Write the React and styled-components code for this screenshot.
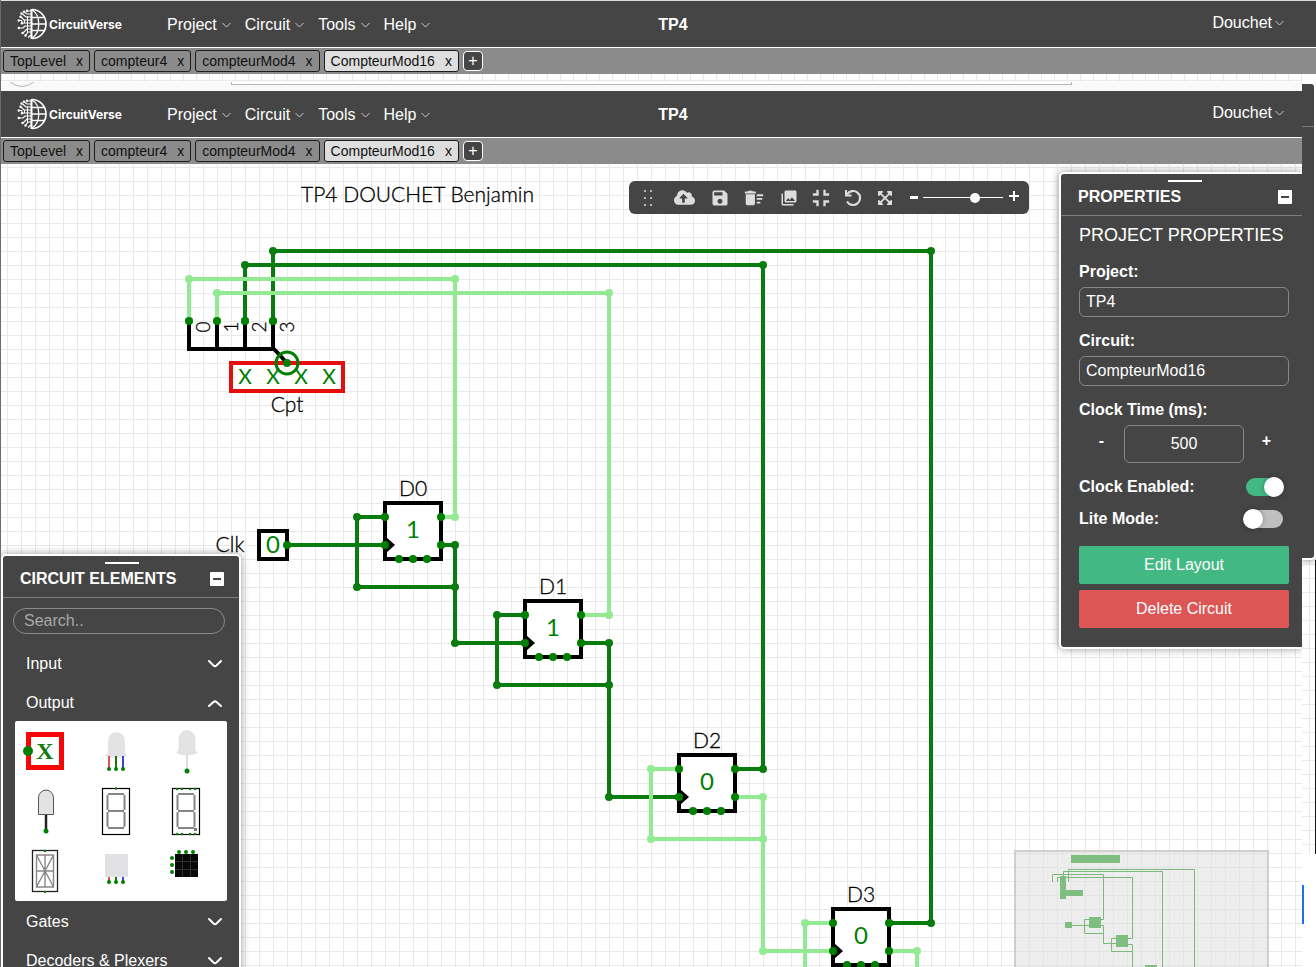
import React from 'react';
import styled, { createGlobalStyle, css } from 'styled-components';
import {
  MdSave,
  MdDeleteSweep,
  MdPhotoLibrary,
  MdFullscreenExit,
} from 'react-icons/md';
import { FaCloudUploadAlt, FaExpandArrowsAlt } from 'react-icons/fa';

const DARK = '#454545';
const GREEN = '#008000';
const WIRE = '#087c0e';
const LIGHT = '#93ea93';

const GlobalStyle = createGlobalStyle`
  * { box-sizing: border-box; }
  body {
    margin: 0;
    background: #fff;
    font-family: "Liberation Sans", Arial, sans-serif;
    font-size: 16px;
  }
  button, input { font: inherit; color: inherit; }
  button { background: none; border: 0; padding: 0; cursor: pointer; }
  svg { flex: none; }
`;

const Page = styled.div`
  display: grid;
  grid-template-columns: minmax(0, 1fr) 14px;
  height: 100vh;
  overflow: hidden;
  border-left: 1px solid #6a6a6a;
`;

const Main = styled.main`
  display: flex;
  flex-direction: column;
  min-height: 0;
  border-top: 1px solid #ddd;
`;

/* ---------- header ---------- */

const Header = styled.header`
  display: flex;
  align-items: center;
  flex: none;
  height: 47px;
  padding: 0 18px 0 16px;
  background: ${DARK};
  border-bottom: 1px solid #fff;
  color: #fff;
`;

const HeaderLeft = styled.div`
  display: flex;
  align-items: center;
  flex: 1 1 45px;
`;

const Brand = styled.a`
  display: flex;
  align-items: center;
  gap: 2px;
  width: 150px;
  color: #fff;
  text-decoration: none;
  font: 700 12px Inter, "Open Sans", sans-serif;
`;

const Menu = styled.nav`
  display: flex;
  gap: 14px;
  padding-top: 2px;
`;

const MenuButton = styled.button`
  display: flex;
  align-items: center;
  gap: ${(p) => (p.$tight ? 3 : 5)}px;
  line-height: 18px;
`;

const ProjectName = styled.h1`
  margin: 0;
  padding-top: 2px;
  font-size: 16px;
  line-height: 18px;
`;

const HeaderRight = styled.div`
  display: flex;
  justify-content: flex-end;
  flex: 1 1 0;
  padding-bottom: 2px;
`;

const Tabs = styled.div`
  display: flex;
  align-items: center;
  flex: none;
  gap: 4px;
  height: 26px;
  padding: 0 2px;
  background: #8b8b8b;
`;

const Tab = styled.div`
  display: flex;
  align-items: center;
  gap: 10px;
  height: 22px;
  padding: 0 6px;
  border: 1px solid #1c1c1c;
  border-radius: 3px;
  background: ${(p) => (p.$active ? '#dedede' : 'transparent')};
  color: #111;
  font-size: 14px;
  line-height: 16px;
`;

const AddTab = styled.button`
  width: 20px;
  height: 20px;
  border: 1px solid #fff;
  border-radius: 4px;
  background: ${DARK};
  color: #fff;
  font-size: 16px;
  line-height: 16px;
`;

const Chevron = () => (
  <svg width="9" height="6" viewBox="0 0 9 6" fill="none" stroke="#ccc" aria-hidden="true">
    <path d="M0.5 1 L4.5 5 L8.5 1" />
  </svg>
);

const Logo = () => (
  <svg width="30" height="32" viewBox="0 0 30 32" fill="none" stroke="#fff" strokeWidth="1.3" aria-hidden="true">
    <path d="M15 1.500 A14 14.500 0 0 1 15 30.500" strokeWidth="1.700" />
    <path d="M14.500 1 V31" strokeWidth="2" />
    <path d="M15 2 C24 7 24 25 15 30" />
    <path d="M15 9.500 H27 M15 16 H29 M15 22.500 H27" />
    <path d="M14 3 H10 M14 6 H10 L7.500 4 M14 9 H9 L5 5.500 M14 12 H7 L4 9 M14 15 H5.500 M14 18 H8 L6 20 H2 M14 21 H10 L6 25 M14 24 H11 L8.500 27.500 M14 27 L11 29.500" strokeWidth="1.200" />
    <path d="M10.500 8 V25 M7.500 12 V15 M2 12.500 H5 V15" strokeWidth="1" />
    <g fill="#fff" stroke="none">
      <circle cx="10" cy="2.800" r="1.200" />
      <circle cx="7" cy="3.800" r="1.200" />
      <circle cx="4.500" cy="5.500" r="1.200" />
      <circle cx="3.500" cy="8.800" r="1.200" />
      <circle cx="1.800" cy="12.500" r="1.200" />
      <circle cx="5" cy="15.300" r="1.200" />
      <circle cx="1.800" cy="20" r="1.200" />
      <circle cx="5.500" cy="25" r="1.200" />
      <circle cx="8.500" cy="27.500" r="1.200" />
    </g>
  </svg>
);

const TAB_NAMES = ['TopLevel', 'compteur4', 'compteurMod4', 'CompteurMod16'];

const TopBar = () => (
  <>
    <Header>
      <HeaderLeft>
        <Brand href="#"><Logo />CircuitVerse</Brand>
        <Menu>
          {['Project', 'Circuit', 'Tools', 'Help'].map((m) => (
            <MenuButton key={m}>{m}<Chevron /></MenuButton>
          ))}
        </Menu>
      </HeaderLeft>
      <ProjectName>TP4</ProjectName>
      <HeaderRight>
        <MenuButton $tight>Douchet<Chevron /></MenuButton>
      </HeaderRight>
    </Header>
    <Tabs>
      {TAB_NAMES.map((t) => (
        <Tab key={t} $active={t === 'CompteurMod16'}>
          <span>{t}</span>
          <button aria-label={'Close ' + t}>x</button>
        </Tab>
      ))}
      <AddTab aria-label="New circuit">+</AddTab>
    </Tabs>
  </>
);

/* ---------- strip between the two windows ---------- */

const gridLines = css`
  background-color: #fff;
  background-image:
    linear-gradient(to right, #e9e9e9 1px, transparent 1px),
    linear-gradient(to bottom, #e9e9e9 1px, transparent 1px);
`;

const GridStrip = styled.div`
  ${gridLines}
  flex: none;
  height: 8px;
  background-size: 13px 13px;
  background-position: 0 6px;
`;

const BrowserStrip = styled.div`
  display: grid;
  grid-template-columns: 222px minmax(0, 1fr);
  flex: none;
  height: 9px;
  padding: 0 230px 0 8px;
  background: #f9f9fa;
`;

const AddressBar = styled.div`
  height: 3px;
  border: 1px solid #b5b5b5;
  border-top: 0;
  background: #fff;
`;

/* ---------- canvas ---------- */

const Canvas = styled.section`
  ${gridLines}
  position: relative;
  flex: 1;
  min-height: 0;
  overflow: hidden;
  background-size: 14px 14px;
  background-position: 6px 3px;
`;

const Drawing = styled.svg`
  display: block;
  width: 100%;
  height: 100%;
  font-family: Lato, "Open Sans", sans-serif;
  font-weight: 300;
  font-size: 21px;
`;

const Label21 = styled.text`
  fill: #000;
  stroke: #000;
  stroke-width: 0.3px;
  text-anchor: ${(p) => p.$anchor || 'middle'};
`;

const Value = styled.text`
  fill: ${GREEN};
  font-size: ${(p) => p.$size || 24}px;
  font-weight: 400;
  text-anchor: middle;
`;

const WIRES = [
  [WIRE, '273,321 273,251 931,251 931,923 889,923'],
  [WIRE, '245,321 245,265 763,265 763,769 735,769'],
  [WIRE, '287,545 385,545'],
  [WIRE, '385,517 357,517 357,587 455,587'],
  [WIRE, '441,545 455,545 455,643 525,643'],
  [WIRE, '525,615 497,615 497,685 609,685'],
  [WIRE, '581,643 609,643 609,797 679,797'],
  [LIGHT, '189,321 189,279 455,279 455,517 441,517'],
  [LIGHT, '217,321 217,293 609,293 609,615 581,615'],
  [LIGHT, '679,769 651,769 651,839 763,839'],
  [LIGHT, '735,797 763,797 763,951 833,951'],
  [LIGHT, '833,923 805,923 805,993'],
  [LIGHT, '889,951 917,951 917,993'],
];

const FLIP_FLOPS = [
  ['D0', '1', 385, 503],
  ['D1', '1', 525, 601],
  ['D2', '0', 679, 755],
  ['D3', '0', 833, 909],
];

const Wire = ({ color, points }) => (
  <g>
    <polyline points={points} fill="none" stroke={color} strokeWidth="4" />
    {points.split(' ').map((p) => {
      const [x, y] = p.split(',');
      return <circle key={p} cx={x} cy={y} r="4" fill={color} />;
    })}
  </g>
);

const PORTS = [[0, 14], [0, 42], [56, 14], [56, 42], [14, 56], [28, 56], [42, 56]];

const FlipFlop = ({ name, value, x, y }) => (
  <g transform={`translate(${x} ${y})`}>
    <rect width="56" height="56" fill="#fff" stroke="#000" strokeWidth="4" />
    <path d="M1 34 L10 42 L1 50 Z" />
    {PORTS.map(([px, py]) => (
      <circle key={px + '-' + py} cx={px} cy={py} r="4" fill={GREEN} />
    ))}
    <Value x="28" y="35">{value}</Value>
    <Label21 x="28" y="-7">{name}</Label21>
  </g>
);

const Circuit = () => (
  <Drawing role="img" aria-label="Circuit">
    <g transform="translate(-1 -164)">
      <Label21 $anchor="start" x="301" y="202">TP4 DOUCHET Benjamin</Label21>
      {WIRES.map(([c, p]) => <Wire key={p} color={c} points={p} />)}
      <path d="M189 321 V349 H273 M217 321 V349 M245 321 V349 M273 321 V349" fill="none" stroke="#000" strokeWidth="4" strokeLinecap="square" />
      <rect x="231" y="363" width="112" height="28" fill="#fff" stroke="#e60d0d" strokeWidth="4" />
      <path d="M274 349 L287 363" stroke="#000" strokeWidth="4" />
      {[245, 273, 301, 329].map((x) => (
        <Value $size={21} key={x} x={x} y="384">X</Value>
      ))}
      <circle cx="287" cy="363" r="11" fill="none" stroke={GREEN} strokeWidth="3" />
      <circle cx="287" cy="363" r="4" fill={GREEN} />
      {[189, 217, 245, 273].map((x, i) => (
        <g key={x}>
          <circle cx={x} cy="321" r="4" fill={GREEN} />
          <Label21 transform={`translate(${x + 21} 327) rotate(-90)`} fontSize="19">{i}</Label21>
        </g>
      ))}
      <Label21 x="287" y="412">Cpt</Label21>
      <Label21 x="230" y="552">Clk</Label21>
      <rect x="259" y="531" width="28" height="28" fill="#fff" stroke="#000" strokeWidth="4" />
      <Value x="273" y="553">0</Value>
      <circle cx="287" cy="545" r="4" fill={GREEN} />
      {FLIP_FLOPS.map(([n, v, x, y]) => <FlipFlop key={n} name={n} value={v} x={x} y={y} />)}
    </g>
  </Drawing>
);

/* ---------- toolbar ---------- */

const Toolbar = styled.div`
  position: absolute;
  top: 17px;
  left: 628px;
  display: flex;
  align-items: center;
  width: 400px;
  height: 33px;
  padding: 0 8px 0 10px;
  border-radius: 6px;
  background: ${DARK};
  color: #ddd;
`;

const ToolButton = styled.button`
  display: flex;
  align-items: center;
  justify-content: center;
  flex: none;
  width: ${(p) => p.$w}px;
  height: 24px;
`;

const ZoomSlider = styled.input`
  appearance: none;
  width: 80px;
  height: 10px;
  margin: 0 4px 0 1px;
  background: linear-gradient(#fff, #fff) center / 100% 1px no-repeat;
  &::-webkit-slider-thumb {
    appearance: none;
    width: 10px;
    height: 10px;
    border-radius: 50%;
    background: #fff;
  }
`;

const Grip = () => (
  <svg width="12" height="18" viewBox="0 0 12 18" fill="#bbb" aria-hidden="true">
    {[1, 8, 15].map((y) => (
      <g key={y}>
        <rect x="2" y={y} width="2" height="2" />
        <rect x="8" y={y} width="2" height="2" />
      </g>
    ))}
  </svg>
);

const Undo = () => (
  <svg width="18" height="18" viewBox="0 0 18 18" fill="none" stroke="currentColor" aria-hidden="true">
    <path d="M3 5.500 A7 7 0 1 1 3 12.500" strokeWidth="2.200" />
    <path d="M2 1 V6.500 H7.500" strokeWidth="2" />
  </svg>
);

const ZoomMark = ({ d, weight }) => (
  <svg width="14" height="14" viewBox="0 0 14 14" stroke="#fff" strokeWidth={weight} aria-hidden="true">
    <path d={d} />
  </svg>
);

const Tools = () => (
  <Toolbar>
    <ToolButton $w={17} aria-label="Move toolbar"><Grip /></ToolButton>
    <ToolButton $w={56} aria-label="Save online"><FaCloudUploadAlt size={21} /></ToolButton>
    <ToolButton $w={16} aria-label="Save offline"><MdSave size={20} /></ToolButton>
    <ToolButton $w={52} aria-label="Delete"><MdDeleteSweep size={22} /></ToolButton>
    <ToolButton $w={18} aria-label="Download image"><MdPhotoLibrary size={18} /></ToolButton>
    <ToolButton $w={46} aria-label="Fit to screen"><MdFullscreenExit size={28} /></ToolButton>
    <ToolButton $w={18} aria-label="Undo"><Undo /></ToolButton>
    <ToolButton $w={46} aria-label="View mode"><FaExpandArrowsAlt size={16} /></ToolButton>
    <ToolButton $w={14} aria-label="Zoom out"><ZoomMark d="M2 6.500 H10" weight="3" /></ToolButton>
    <ZoomSlider type="range" aria-label="Zoom" min="0" max="100" defaultValue="67" />
    <ToolButton $w={14} aria-label="Zoom in"><ZoomMark d="M2 5 H12 M7 0 V10" weight="2" /></ToolButton>
  </Toolbar>
);

/* ---------- panels ---------- */

const Panel = styled.aside`
  position: absolute;
  border: 2px solid #fff;
  background: ${DARK};
  color: #fff;
  box-shadow: 0 0 8px rgba(0, 0, 0, 0.4);
`;

const ElementsPanel = styled(Panel)`
  top: 390px;
  left: 0;
  width: 240px;
  min-height: 430px;
  border-radius: 5px;
`;

const PropertiesPanel = styled(Panel)`
  top: 8px;
  right: 0;
  width: 243px;
  height: 477px;
  border-right: 0;
  border-radius: 5px 0 0 5px;
`;

const PanelHead = styled.div`
  display: flex;
  flex-direction: column;
  align-items: center;
  height: 42px;
  padding: 6px ${(p) => p.$right}px 0 17px;
  border-bottom: 1px solid #7d7d7d;
`;

const Handle = styled.div`
  width: 34px;
  height: 2px;
  background: #fff;
`;

const PanelTitleRow = styled.div`
  display: flex;
  align-items: center;
  justify-content: space-between;
  align-self: stretch;
  height: 30px;
`;

const PanelTitle = styled.h2`
  margin: 0;
  font-size: 16px;
  line-height: 18px;
`;

const Minimise = styled.button`
  display: grid;
  place-items: center;
  width: 14px;
  height: 14px;
  border-radius: 1px;
  background: #fff;
  &::before {
    content: "";
    width: 8px;
    height: 2px;
    background: ${DARK};
  }
`;

const PanelHeader = ({ title, right }) => (
  <PanelHead $right={right}>
    <Handle />
    <PanelTitleRow>
      <PanelTitle>{title}</PanelTitle>
      <Minimise aria-label={'Minimise ' + title} />
    </PanelTitleRow>
  </PanelHead>
);

const Search = styled.input`
  display: block;
  width: 212px;
  height: 26px;
  margin: 10px 0 12px 10px;
  padding: 0 10px;
  border: 1px solid #8a8a8a;
  border-radius: 13px;
  background: transparent;
  &::placeholder { color: #a8a8a8; opacity: 1; }
`;

const Categories = styled.div`
  display: flex;
  flex-direction: column;
  gap: 3px;
  padding: 0 12px;
`;

const Category = styled.button`
  display: flex;
  align-items: center;
  justify-content: space-between;
  width: 100%;
  height: 36px;
  padding: 0 5px 0 11px;
`;

const ElementGrid = styled.div`
  display: grid;
  grid-template-columns: repeat(3, 60px);
  grid-auto-rows: 60px;
  column-gap: 11px;
  width: 212px;
  border-radius: 2px;
  background: #fff;
`;

const BigChevron = ({ up }) => (
  <svg width="14" height="10" viewBox="0 0 14 10" fill="none" stroke="#fff" strokeWidth="2" aria-hidden="true">
    <path d={up ? 'M1 8 L5.500 4 Q7 2.800 8.500 4 L13 8' : 'M1 2 L5.500 6.500 Q7 7.800 8.500 6.500 L13 2'} strokeLinecap="round" />
  </svg>
);

const Dots = ({ at, r = 2 }) => at.map(([x, y]) => (
  <circle key={x + '-' + y} cx={x} cy={y} r={r} fill={GREEN} stroke="none" />
));

const DIGIT = 'M22 13 H38 M22 30 H38 M22 47 H38 M21.500 14 V29 M38.500 14 V29 M21.500 31 V46 M38.500 31 V46';

const ELEMENTS = {
  Output: (
    <>
      <rect x="13.500" y="13.500" width="33" height="33" fill="#fff" stroke="#f60606" strokeWidth="5" />
      <Dots at={[[13, 30]]} r={5} />
      <text x="30" y="38" textAnchor="middle" fill="#117a11" fontFamily="Liberation Serif, serif" fontWeight="700" fontSize="24">X</text>
    </>
  ),
  'RGB LED': (
    <>
      <path d="M22 32 V20 A8 8.500 0 0 1 39 20 V32 L41 35 Q30 39 19 35 Z" fill="#e3e3e5" />
      <path d="M23 35 V47" stroke="#e05050" strokeWidth="2" />
      <path d="M30 35 V47" stroke="#117711" strokeWidth="2" />
      <path d="M37 35 V47" stroke="#4040dd" strokeWidth="2" />
      <Dots at={[[23, 48], [30, 48], [37, 48]]} />
    </>
  ),
  'Digital LED': (
    <>
      <path d="M30 32 V49" stroke="#ddd" strokeWidth="2" />
      <path d="M22 29 V18 A8 8.500 0 0 1 38 18 V29 L40 32 Q30 36 20 32 Z" fill="#e3e3e5" stroke="#d4d4d4" strokeWidth="0.500" />
      <Dots at={[[30, 50]]} r={2.5} />
    </>
  ),
  'Variable LED': (
    <>
      <path d="M31 34 V49" stroke="#222" strokeWidth="2.500" />
      <path d="M23.500 33.500 V17 A7.500 8 0 0 1 38.500 17 V33.500 Z" fill="#e3e3e5" stroke="#555" />
      <Dots at={[[31, 50]]} r={2.5} />
    </>
  ),
  'Hex display': (
    <>
      <rect x="16.500" y="7.500" width="27" height="46" fill="#fff" stroke="#000" strokeWidth="1.200" />
      <path d={DIGIT} stroke="#858585" strokeWidth="2" />
      <Dots at={[[30, 7.5]]} r={1.2} />
    </>
  ),
  'Seven segment display': (
    <>
      <rect x="15.500" y="7.500" width="27" height="46" fill="#fff" stroke="#000" strokeWidth="1.200" />
      <path d={DIGIT} transform="translate(-1 0)" stroke="#858585" strokeWidth="2" />
      <rect x="37" y="47" width="3" height="3" fill="#777" />
      <Dots at={[[20, 8], [25, 8], [33, 8], [38, 8], [20, 53], [25, 53], [33, 53], [38, 53]]} r={1.2} />
    </>
  ),
  'Sixteen segment display': (
    <>
      <rect x="17.500" y="9.500" width="25" height="41" fill="#fff" stroke="#222" strokeWidth="1.300" />
      <path d="M21.500 14 H38.500 V46 H21.500 Z M21.500 30 H38.500 M30 14 V46 M22 15 L38 45 M38 15 L22 45" stroke="#888" strokeWidth="1.400" />
      <Dots at={[[30, 10], [30, 51]]} r={1.2} />
    </>
  ),
  'Square RGB LED': (
    <>
      <path d="M23 35 V40" stroke="#e05050" strokeWidth="2" />
      <path d="M30 35 V40" stroke="#117711" strokeWidth="2" />
      <path d="M37 35 V40" stroke="#4040dd" strokeWidth="2" />
      <rect x="19" y="13" width="23" height="23" fill="#e1e1e3" />
      <Dots at={[[23, 41], [30, 41], [37, 41]]} />
    </>
  ),
  'RGB LED matrix': (
    <>
      <rect x="18" y="13" width="23" height="23" fill="#080808" />
      <path d="M25.500 13 V36 M33.500 13 V36 M18 20.500 H41 M18 28.500 H41" stroke="#303030" />
      <Dots at={[[22, 11], [29, 11], [36, 11], [15, 17], [15, 24], [15, 31]]} />
    </>
  ),
};

const Elements = () => (
  <ElementsPanel>
    <PanelHeader title="CIRCUIT ELEMENTS" right={15} />
    <Search type="text" placeholder="Search.." aria-label="Search elements" />
    <Categories>
      <Category>Input<BigChevron /></Category>
      <div>
        <Category aria-expanded="true">Output<BigChevron up /></Category>
        <ElementGrid>
          {Object.entries(ELEMENTS).map(([name, art]) => (
            <button key={name} aria-label={name}>
              <svg width="60" height="60" viewBox="0 0 60 60" fill="none" aria-hidden="true">{art}</svg>
            </button>
          ))}
        </ElementGrid>
      </div>
      <Category>Gates<BigChevron /></Category>
      <Category>Decoders &amp; Plexers<BigChevron /></Category>
    </Categories>
  </ElementsPanel>
);

const Form = styled.form`
  display: flex;
  flex-direction: column;
  padding: 9px 13px 0 18px;
`;

const FormTitle = styled.h3`
  margin: 0 0 18px;
  font-weight: 400;
  font-size: 18px;
  line-height: 20px;
  white-space: nowrap;
`;

const Label = styled.label`
  font-weight: 700;
  line-height: 18px;
`;

const Field = styled.input`
  width: 100%;
  height: 30px;
  margin: 6px 0 15px;
  padding: 0 6px;
  border: 1px solid #868686;
  border-radius: 6px;
  background: transparent;
`;

const Stepper = styled.div`
  display: grid;
  grid-template-columns: 45px 120px 45px;
  margin: 6px 0 14px;
`;

const StepButton = styled.button`
  padding-bottom: 6px;
  font-weight: 700;
`;

const NumberField = styled(Field)`
  height: 38px;
  margin: 0;
  text-align: center;
`;

const SwitchRow = styled.div`
  display: flex;
  align-items: center;
  justify-content: space-between;
  height: 20px;
  margin-bottom: 12px;
  padding-right: 6px;
`;

const Switch = styled.input`
  appearance: none;
  position: relative;
  width: 37px;
  height: 18px;
  margin: 0;
  border-radius: 9px;
  background: #bfbfbf;
  &::before {
    content: "";
    position: absolute;
    top: -1px;
    left: -3px;
    width: 20px;
    height: 20px;
    border-radius: 50%;
    background: #fff;
    box-shadow: 0 0 5px rgba(0, 0, 0, 0.3);
  }
  &:checked { background: #42b983; }
  &:checked::before { left: 18px; }
`;

const Actions = styled.div`
  display: grid;
  gap: 6px;
  padding-top: 5px;
`;

const Action = styled.button`
  height: 38px;
  border-radius: 2px;
  background: ${(p) => (p.$danger ? '#dc5656' : '#42b983')};
`;

const Properties = () => (
  <PropertiesPanel>
    <PanelHeader title="PROPERTIES" right={10} />
    <Form>
      <FormTitle>PROJECT PROPERTIES</FormTitle>
      <Label htmlFor="project">Project:</Label>
      <Field id="project" type="text" defaultValue="TP4" />
      <Label htmlFor="circuit">Circuit:</Label>
      <Field id="circuit" type="text" defaultValue="CompteurMod16" />
      <Label htmlFor="clock">Clock Time (ms):</Label>
      <Stepper>
        <StepButton type="button" aria-label="Decrease">-</StepButton>
        <NumberField id="clock" type="text" defaultValue="500" />
        <StepButton type="button" aria-label="Increase">+</StepButton>
      </Stepper>
      <SwitchRow>
        <Label htmlFor="enabled">Clock Enabled:</Label>
        <Switch id="enabled" type="checkbox" defaultChecked />
      </SwitchRow>
      <SwitchRow>
        <Label htmlFor="lite">Lite Mode:</Label>
        <Switch id="lite" type="checkbox" />
      </SwitchRow>
      <Actions>
        <Action type="button">Edit Layout</Action>
        <Action type="button" $danger>Delete Circuit</Action>
      </Actions>
    </Form>
  </PropertiesPanel>
);

/* ---------- mini map ---------- */

const MiniMapBox = styled.div`
  position: absolute;
  right: 33px;
  bottom: 0;
  width: 255px;
  height: 117px;
  border: 2px solid rgba(190, 190, 190, 0.6);
  border-bottom: 0;
  background: rgba(225, 225, 225, 0.6);
`;

const MiniMap = () => (
  <MiniMapBox>
    <svg width="251" height="115" viewBox="1016 852 251 115" fill="none" stroke="#7fb77f" strokeWidth="1" role="img" aria-label="Mini map">
      <path d="M1052.500 882 V874.500 H1103.500 V919.500 H1101 M1057.500 882 V877.500 H1132.500 V938.500 H1128 M1063.500 882 V871.500 H1162.500 V967 M1068.500 882 V869.500 H1194.500 V967" />
      <path d="M1071 925.500 H1089 M1089 919.500 H1084.500 V933.500 H1103.500 M1101 925.500 H1103.500 V943.500 H1116 M1116 938.500 H1111.500 V951.500 H1132.500 M1128 944.500 H1132.500 V967" />
      <g fill="#80bd80" stroke="none">
        <rect x="1071" y="855" width="49" height="8" />
        <rect x="1060" y="876" width="6" height="23" />
        <rect x="1066" y="890" width="17" height="6" />
        <rect x="1065" y="922" width="7" height="6" />
        <rect x="1089" y="917" width="12" height="11" />
        <rect x="1116" y="935" width="12" height="12" />
        <rect x="1145" y="965" width="12" height="3" />
      </g>
    </svg>
  </MiniMapBox>
);

/* ---------- right edge of the window behind ---------- */

const Edge = styled.div`
  display: flex;
  flex-direction: column;
  min-height: 0;
  border-top: 1px solid #ddd;
`;

const EdgeHeader = styled.div`
  flex: none;
  height: 47px;
  background: ${DARK};
  border-bottom: 1px solid #fff;
`;

const EdgeTabs = styled.div`
  flex: none;
  height: 26px;
  background: #8b8b8b;
`;

const EdgePanel = styled.div`
  flex: none;
  height: 478px;
  margin-top: 8px;
  padding-top: 42px;
  border: 2px solid #fff;
  border-left: 0;
  border-radius: 0 5px 5px 0;
  background: ${DARK};
  box-shadow: inset -1px 0 0 ${DARK}, 0 2px 5px rgba(0, 0, 0, 0.3);
  clip-path: inset(0 0 -8px 0);
  &::before {
    content: "";
    display: block;
    height: 1px;
    background: #7d7d7d;
  }
`;

const EdgeGrid = styled.div`
  ${gridLines}
  flex: none;
  height: 294px;
  border-right: 1px solid #111;
  background-size: 14px 14px;
  background-position: 7px 4px;
`;

const EdgeRest = styled.div`
  flex: 1;
  padding-top: 31px;
  background: #fff;
  &::before {
    content: "";
    display: block;
    width: 2px;
    height: 39px;
    background: #1773ea;
  }
`;

export default function App() {
  return (
    <Page>
      <GlobalStyle />
      <Main>
        <TopBar />
        <GridStrip />
        <BrowserStrip>
          <svg width="26" height="5" viewBox="0 0 26 5" fill="none" stroke="#b5b5b5" aria-hidden="true">
            <path d="M1 0 Q13 9 25 0" />
          </svg>
          <AddressBar />
        </BrowserStrip>
        <TopBar />
        <Canvas>
          <Circuit />
          <Tools />
          <Elements />
          <Properties />
          <MiniMap />
        </Canvas>
      </Main>
      <Edge>
        <EdgeHeader />
        <EdgeTabs />
        <EdgePanel />
        <EdgeGrid />
        <EdgeRest />
      </Edge>
    </Page>
  );
}
